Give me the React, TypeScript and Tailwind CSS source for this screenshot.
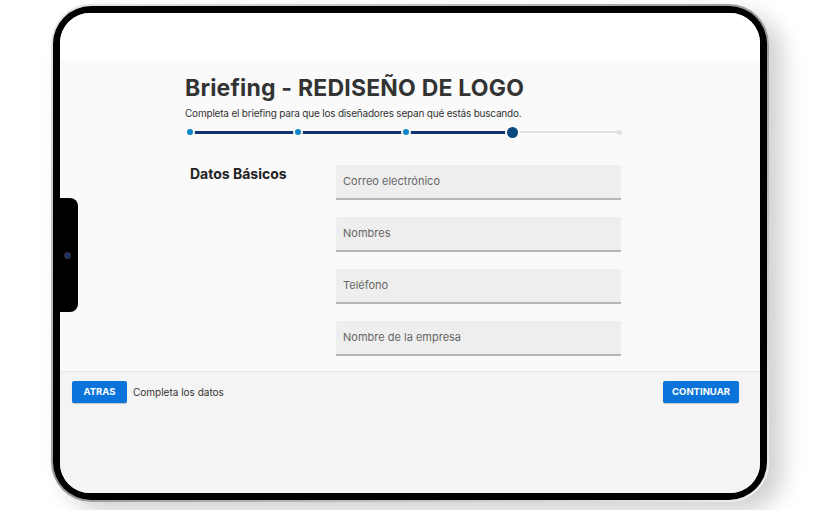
import React from "react";

const font = { fontFamily: "Inter, 'Open Sans', sans-serif" };

function Field({ label }: { label: string }) {
  return (
    <div className="h-[35px] w-[285px] bg-[#eeeeee] border-b-[2px] border-[#b4b4b4] rounded-t-[2px] flex items-center pl-[7px] text-[11px] text-[#666]">
      {label}
    </div>
  );
}

export default function App() {
  return (
    <div className="w-[822px] h-[510px] bg-white relative overflow-hidden" style={font}>
      <div className="absolute left-[51px] top-[4px] w-[718px] h-[498px] rounded-[40px] bg-gradient-to-br from-[#e8e8e8] via-[#9a9a9a] to-[#f0f0f0] p-[2px] shadow-[14px_10px_22px_rgba(0,0,0,0.18)]">
        <div className="w-full h-full rounded-[38px] bg-black p-[7px]">
          <div className="w-full h-full rounded-[30px] overflow-hidden bg-[#fafafa] flex flex-col">
            <div className="h-[47px] bg-white shrink-0" />
            <div className="h-[311px] shrink-0 bg-[#fafafa] pl-[125px]">
              <div className="w-[440px]">
                <h1 className="text-[23px] font-bold text-[#333] leading-none mt-[17px] tracking-[0.2px]">
                  Briefing - REDISEÑO DE LOGO
                </h1>
                <p className="text-[10px] text-[#333] mt-[8px] leading-none tracking-[-0.2px]">
                  Completa el briefing para que los diseñadores sepan qué estás buscando.
                </p>
                <div className="relative h-[12px] mt-[8px] ml-[5px] w-[432px]">
                  <div className="absolute left-0 top-[5px] w-[323px] h-[3px] bg-[#13316e]" />
                  <div className="absolute left-[323px] top-[5px] w-[106px] h-[2px] bg-[#e2e2e2]" />
                  <div className="absolute left-[-3px] top-[3px] w-[6px] h-[6px] rounded-full bg-[#0a86c9] ring-2 ring-[#fafafa]" />
                  <div className="absolute left-[105px] top-[3px] w-[6px] h-[6px] rounded-full bg-[#0a86c9] ring-2 ring-[#fafafa]" />
                  <div className="absolute left-[213px] top-[3px] w-[6px] h-[6px] rounded-full bg-[#0a86c9] ring-2 ring-[#fafafa]" />
                  <div className="absolute left-[317px] top-[1px] w-[11px] h-[11px] rounded-full bg-[#0b4a80] ring-2 ring-[#fafafa]" />
                  <div className="absolute left-[427px] top-[4px] w-[5px] h-[5px] rounded-full bg-[#e2e2e2]" />
                </div>
                <div className="flex mt-[27px]">
                  <div className="w-[151px] pl-[5px] text-[14px] font-bold text-[#222] leading-none pt-[2px]">Datos Básicos</div>
                  <div className="flex flex-col gap-[17px]">
                    <Field label="Correo electrónico" />
                    <Field label="Nombres" />
                    <Field label="Teléfono" />
                    <Field label="Nombre de la empresa" />
                  </div>
                </div>
              </div>
            </div>
            <div className="flex-1 bg-[#f4f4f4] border-t border-[#e8e8e8] pl-[12px] pr-[11px] pt-[9px]">
              <div className="flex items-center justify-between">
                <div className="flex items-center gap-[6px]">
                  <button className="w-[55px] h-[22px] bg-[#0a74da] text-white text-[9.5px] font-bold rounded-[2px] shadow-[0_1px_1px_rgba(0,0,0,0.2)]">
                    ATRAS
                  </button>
                  <span className="text-[10px] text-[#333]">Completa los datos</span>
                </div>
                <button className="w-[76px] h-[22px] bg-[#0a74da] text-white text-[9.5px] font-bold rounded-[2px] shadow-[0_1px_1px_rgba(0,0,0,0.2)] mr-[10px]">
                  CONTINUAR
                </button>
              </div>
            </div>
          </div>
        </div>
      </div>
      <div className="absolute left-[53px] top-[198px] w-[25px] h-[114px] bg-black rounded-r-[8px] flex items-center justify-start pl-[12px]">
        <div className="w-[5px] h-[5px] rounded-full bg-[#1e3270] ring-1 ring-[#333]" />
      </div>
    </div>
  );
}
